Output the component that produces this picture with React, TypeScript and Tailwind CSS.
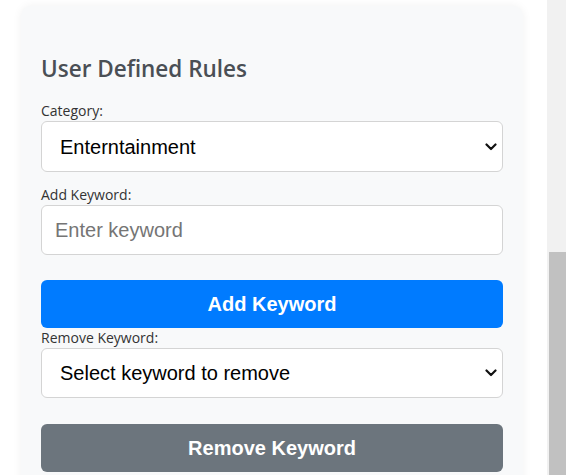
import React from "react";

function Chevron() {
  return (
    <svg
      className="pointer-events-none absolute right-[6px] top-1/2 -translate-y-1/2"
      width="12"
      height="8"
      viewBox="0 0 12 8"
      fill="none"
    >
      <path d="M1.5 1.5 L6 6 L10.5 1.5" stroke="#111" strokeWidth="2.2" strokeLinecap="round" strokeLinejoin="round" />
    </svg>
  );
}

export default function App() {
  return (
    <div className="flex h-[475px] w-[566px] overflow-hidden bg-white">
      <div className="flex-1">
        <div className="ml-[21px] mt-[6px] w-[502px] rounded-[10px] bg-[#f8f9fa] px-[20px] pt-[49px] pb-[20px] shadow-[0_0_10px_rgba(0,0,0,0.06)]">
          <h2 className="mb-[19px] font-['Open_Sans',sans-serif] text-[22.5px] font-semibold leading-[1.2] text-[#4a4f55]">
            User Defined Rules
          </h2>

          <label className="block h-[20px] font-['Open_Sans',sans-serif] text-[14px] leading-[20px] text-[#333]">
            Category:
          </label>
          <div className="relative mb-[13px]">
            <select
              defaultValue="ent"
              className="h-[51px] w-full appearance-none rounded-[6px] border border-[#d4d4d4] bg-white pl-[18px] font-['Liberation_Sans',Arial,sans-serif] text-[20px] text-black outline-none"
            >
              <option value="ent">Enterntainment</option>
            </select>
            <Chevron />
          </div>

          <label className="block h-[20px] font-['Open_Sans',sans-serif] text-[14px] leading-[20px] text-[#333]">
            Add Keyword:
          </label>
          <input
            placeholder="Enter keyword"
            className="mb-[25px] block h-[50px] w-full rounded-[6px] border border-[#d4d4d4] bg-white px-[13px] font-['Liberation_Sans',Arial,sans-serif] text-[20px] text-black outline-none placeholder:text-[#757575]"
          />

          <button className="block h-[48px] w-full rounded-[6px] bg-[#007bff] font-['Liberation_Sans',Arial,sans-serif] text-[20px] font-bold text-white">
            Add Keyword
          </button>

          <label className="block h-[20px] font-['Open_Sans',sans-serif] text-[14px] leading-[20px] text-[#333]">
            Remove Keyword:
          </label>
          <div className="relative mb-[26px]">
            <select
              defaultValue=""
              className="h-[50px] w-full appearance-none rounded-[6px] border border-[#d4d4d4] bg-white pl-[18px] font-['Liberation_Sans',Arial,sans-serif] text-[20px] text-black outline-none"
            >
              <option value="">Select keyword to remove</option>
            </select>
            <Chevron />
          </div>

          <button className="block h-[48px] w-full rounded-[6px] bg-[#6c757d] font-['Liberation_Sans',Arial,sans-serif] text-[20px] font-bold text-white">
            Remove Keyword
          </button>
        </div>
      </div>

      <div className="flex h-full w-[19px] flex-col bg-[#f1f1f1] pl-[2px]">
        <div className="mt-[252px] flex-1 bg-[#c1c1c1]" />
      </div>
    </div>
  );
}
